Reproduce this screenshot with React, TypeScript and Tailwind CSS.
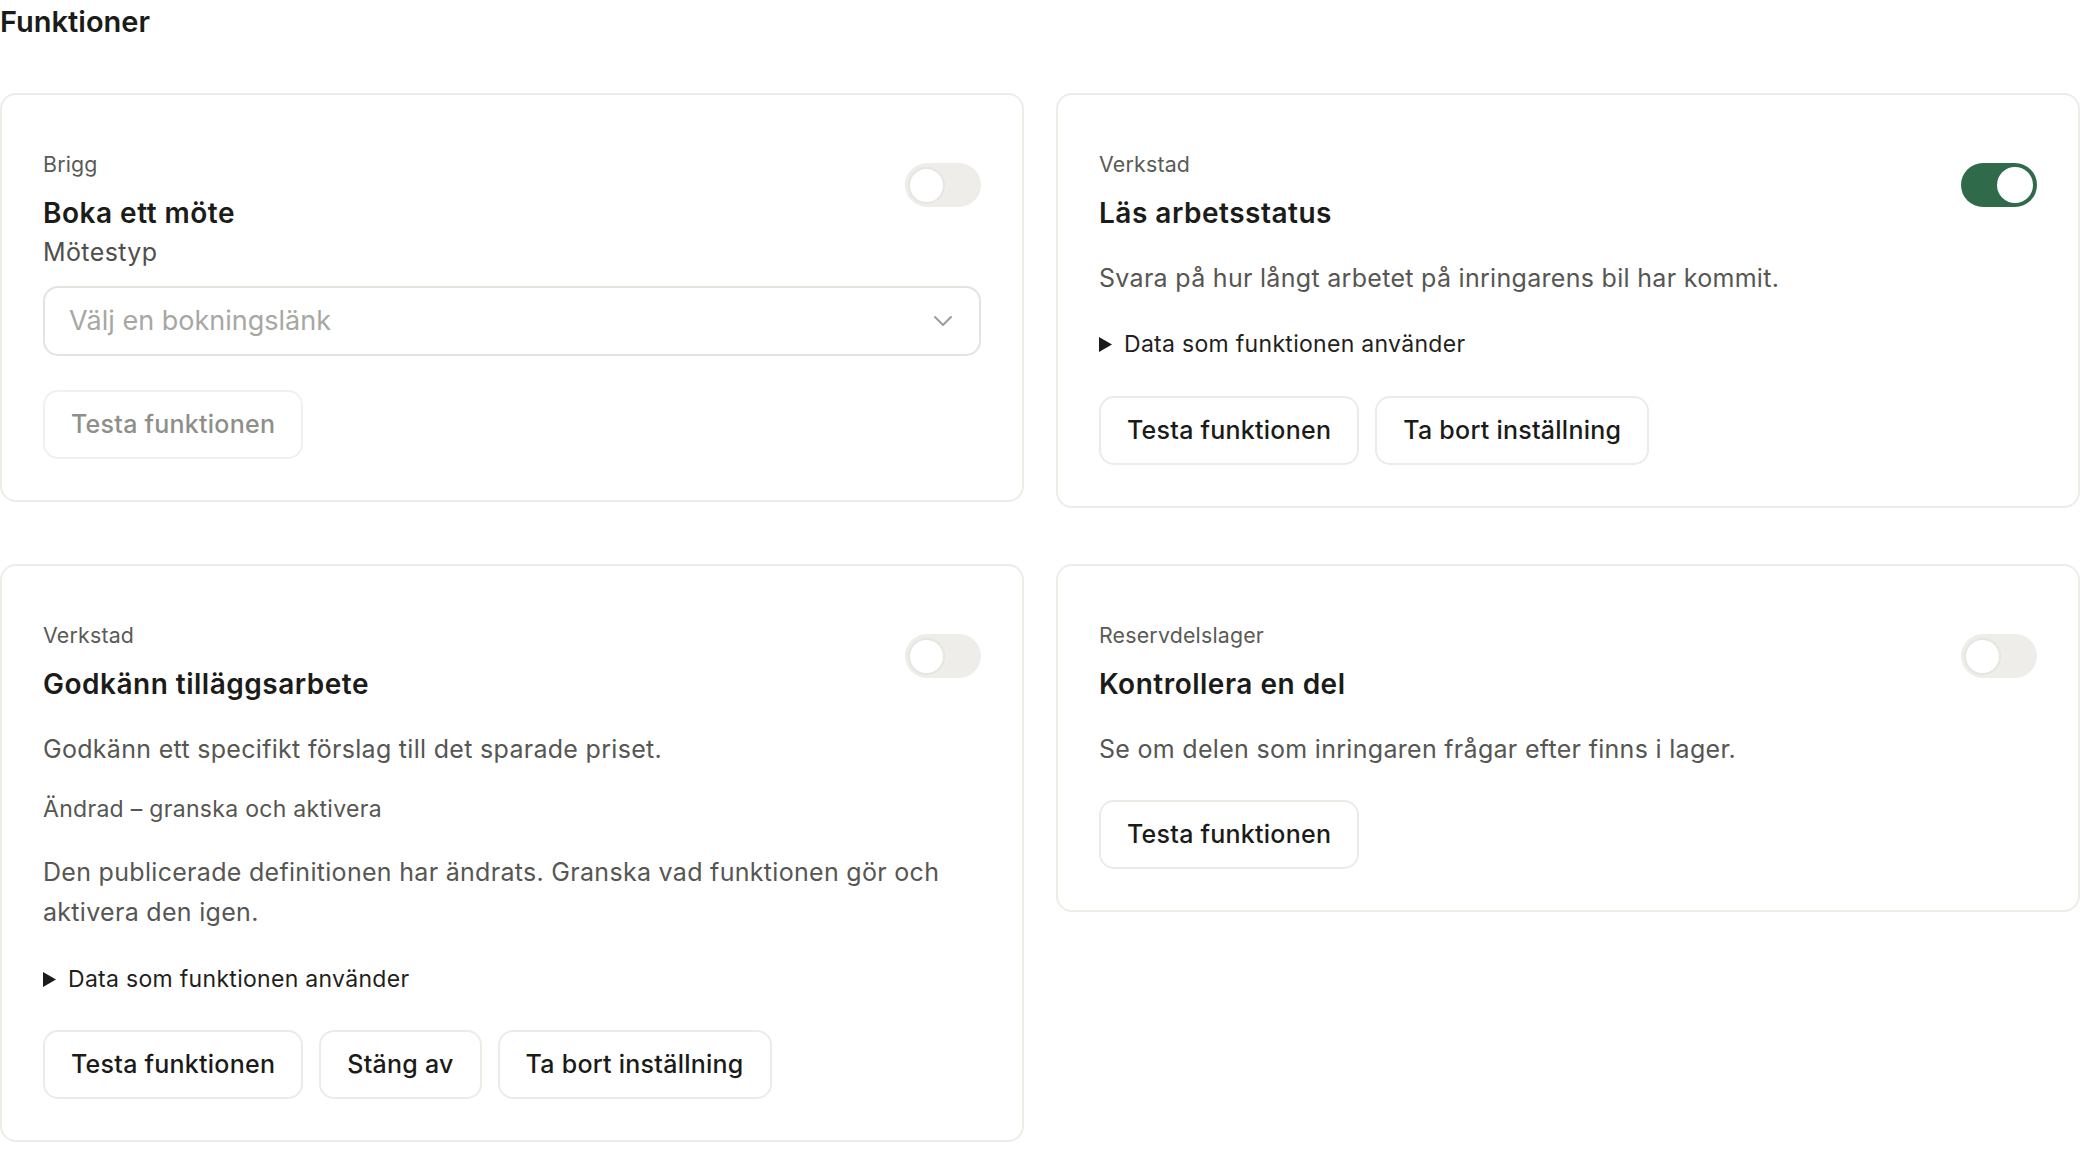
import React from "react";

type Feature = {
  area: string;
  title: string;
  enabled: boolean;
};

function Toggle({ on }: { on: boolean }) {
  return (
    <div
      className={
        on
          ? "flex h-[44px] w-[76px] shrink-0 items-center justify-end rounded-full bg-[#2f6b4a] p-[4px]"
          : "flex h-[44px] w-[76px] shrink-0 items-center justify-start rounded-full bg-[#eeede9] px-[3px] py-[4px]"
      }
    >
      <span
        className={
          on
            ? "block h-[36px] w-[36px] rounded-full bg-white"
            : "block h-[37px] w-[37px] rounded-full border-2 border-[#e6e5e0] bg-white"
        }
      />
    </div>
  );
}

function CardHeader({ feature }: { feature: Feature }) {
  return (
    <div className="flex items-start justify-between">
      <div>
        <p className="text-[21.33px] leading-[32px] tracking-[0.2px] text-[#5a5a56]">{feature.area}</p>
        <h2 className="mt-[15px] text-[28px] font-semibold leading-[36px] tracking-[0.5px] text-[#1b1b19]">
          {feature.title}
        </h2>
      </div>
      <div className="mt-[15px]">
        <Toggle on={feature.enabled} />
      </div>
    </div>
  );
}

function Button({ children, disabled }: { children: React.ReactNode; disabled?: boolean }) {
  return (
    <button
      type="button"
      className={
        disabled
          ? "h-[69px] rounded-[15px] border-2 border-[#f1f0ec] px-[26px] text-[25px] font-medium tracking-[0.25px] text-[#8e8e8a]"
          : "h-[69px] rounded-[15px] border-2 border-[#ecebe6] bg-white px-[26px] text-[25px] font-medium tracking-[0.25px] text-[#1b1b19]"
      }
    >
      {children}
    </button>
  );
}

function DataSummary() {
  return (
    <div className="flex items-center text-[23px] leading-[34px] tracking-[0.3px] text-[#1f1f1d]">
      <svg width="13" height="15" viewBox="0 0 13 15" className="mr-[12px] shrink-0">
        <path d="M0 0 L13 7.5 L0 15 Z" fill="#1a1a1a" />
      </svg>
      Data som funktionen använder
    </div>
  );
}

function Card({ children }: { children: React.ReactNode }) {
  return (
    <div className="rounded-[16px] border-2 border-[#edece7] bg-white px-[41px] pb-[41px] pt-[53px]">
      {children}
    </div>
  );
}

const desc = "text-[25px] leading-[40px] tracking-[0.3px] text-[#565653]";

export default function App() {
  return (
    <div className="min-h-screen bg-white font-['Inter',sans-serif] text-[#1b1b19]">
      <h1 className="text-[29px] font-semibold leading-[44px] text-[#1b1b19]">Funktioner</h1>

      <div className="mt-[49px] grid grid-cols-2 items-start gap-x-[32px] gap-y-[56px]">
        <Card>
          <CardHeader feature={{ area: "Brigg", title: "Boka ett möte", enabled: false }} />
          <p className="text-[25px] leading-[42px] tracking-[0.4px] text-[#4f4f4c]">Mötestyp</p>
          <div className="mt-[13px] flex h-[70px] items-center justify-between rounded-[15px] border-2 border-[#e4e3de] pl-[24px] pr-[26px]">
            <span className="text-[27px] text-[#a7a7a3]">Välj en bokningslänk</span>
            <svg width="20" height="12" viewBox="0 0 20 12" fill="none">
              <path d="M2 2 L10 10 L18 2" stroke="#9c9c99" strokeWidth="2" strokeLinecap="round" strokeLinejoin="round" />
            </svg>
          </div>
          <div className="mt-[34px] flex">
            <Button disabled>Testa funktionen</Button>
          </div>
        </Card>

        <Card>
          <CardHeader feature={{ area: "Verkstad", title: "Läs arbetsstatus", enabled: true }} />
          <p className={`mt-[27px] ${desc}`}>Svara på hur långt arbetet på inringarens bil har kommit.</p>
          <div className="mt-[29px]">
            <DataSummary />
          </div>
          <div className="mt-[35px] flex gap-[16px]">
            <Button>Testa funktionen</Button>
            <Button>Ta bort inställning</Button>
          </div>
        </Card>

        <Card>
          <CardHeader feature={{ area: "Verkstad", title: "Godkänn tilläggsarbete", enabled: false }} />
          <p className={`mt-[27px] ${desc}`}>Godkänn ett specifikt förslag till det sparade priset.</p>
          <p className="mt-[24px] text-[23px] leading-[32px] tracking-[0.3px] text-[#565653]">Ändrad – granska och aktivera</p>
          <p className={`mt-[27px] ${desc}`}>
            Den publicerade definitionen har ändrats. Granska vad funktionen gör och aktivera den igen.
          </p>
          <div className="mt-[30px]">
            <DataSummary />
          </div>
          <div className="mt-[34px] flex gap-[16px]">
            <Button>Testa funktionen</Button>
            <Button>Stäng av</Button>
            <Button>Ta bort inställning</Button>
          </div>
        </Card>

        <Card>
          <CardHeader feature={{ area: "Reservdelslager", title: "Kontrollera en del", enabled: false }} />
          <p className={`mt-[27px] ${desc}`}>Se om delen som inringaren frågar efter finns i lager.</p>
          <div className="mt-[31px] flex">
            <Button>Testa funktionen</Button>
          </div>
        </Card>
      </div>
    </div>
  );
}
